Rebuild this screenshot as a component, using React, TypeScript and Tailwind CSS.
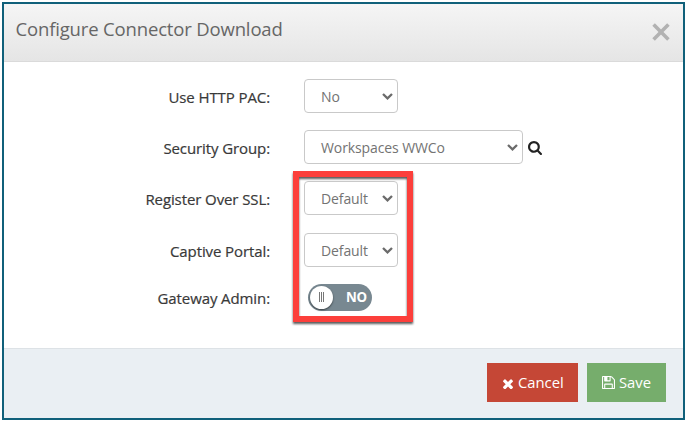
import React from "react";

const timesPath =
  "M1490 1322q0 40-28 68l-136 136q-28 28-68 28t-68-28l-294-294-294 294q-28 28-68 28t-68-28l-136-136q-28-28-28-68t28-68l294-294-294-294q-28-28-28-68t28-68l136-136q28-28 68-28t68 28l294 294 294-294q28-28 68-28t68 28l136 136q28 28 28 68t-28 68l-294 294 294 294q28 28 28 68z";
const searchPath =
  "M1216 832q0-185-131.5-316.5t-316.5-131.5-316.5 131.5-131.5 316.5 131.5 316.5 316.5 131.5 316.5-131.5 131.5-316.5zm512 832q0 52-38 90t-90 38q-54 0-90-38l-343-342q-179 124-399 124-143 0-273.5-55.5t-225-150-150-225-55.5-273.5 55.5-273.5 150-225 225-150 273.5-55.5 273.5 55.5 225 150 150 225 55.5 273.5q0 220-124 399l343 343q37 37 37 90z";
const savePath =
  "M384 1536h768v-384h-768v384zm896 0h128v-896q0-14-10-38.5t-20-34.5l-281-281q-10-10-34-20t-39-10v416q0 40-28 68t-68 28h-576q-40 0-68-28t-28-68v-416h-128v1280h128v-416q0-40 28-68t68-28h832q40 0 68 28t28 68v416zm-384-928v-320q0-13-9.5-22.5t-22.5-9.5h-192q-13 0-22.5 9.5t-9.5 22.5v320q0 13 9.5 22.5t22.5 9.5h192q13 0 22.5-9.5t9.5-22.5zm640 32v928q0 40-28 68t-68 28h-1344q-40 0-68-28t-28-68v-1344q0-40 28-68t68-28h928q40 0 88 20t76 48l280 280q28 28 48 76t20 88z";

function Row({ label, className, children }: { label: string; className: string; children: React.ReactNode }) {
  return (
    <div className={`flex items-center ${className}`}>
      <span className="mr-[34px] w-[266px] pt-[1px] text-right text-[15px] leading-5 tracking-[-0.1px] whitespace-nowrap text-[#393939] [-webkit-text-stroke:0.2px_#393939]">
        {label}
      </span>
      {children}
    </div>
  );
}

function Select({ value, wide = false }: { value: string; wide?: boolean }) {
  return (
    <button
      className={`flex h-[34px] items-center justify-between rounded-[4px] border border-[#c9c9c9] bg-white pr-1 pl-4 text-[14px] tracking-[-0.1px] text-[#737373] ${wide ? "w-[219px]" : "w-[94px]"}`}
    >
      <span className="whitespace-nowrap">{value}</span>
      <svg className="h-[7px] w-[11px]" viewBox="0 0 11 7" fill="none" stroke="#6b6b6b" strokeWidth="2.3">
        <path d="M1 1l4.5 4.4L10 1" />
      </svg>
    </button>
  );
}

export default function App() {
  return (
    <div className="h-[422px] w-[687px] bg-white p-[2px] font-['Open_Sans',sans-serif]">
      <div className="relative flex h-[418px] w-[683px] flex-col border-2 border-[#10607a] bg-white">
        <header className="flex h-[58px] shrink-0 items-start justify-between border-b border-[#dadada] bg-linear-to-b from-[#f5f5f5] to-[#e5e5e5] pr-[13px] pl-[11.5px]">
          <h1 className="pt-[13px] text-[18.5px] leading-6 tracking-[-0.16px] whitespace-nowrap text-[#666]">
            Configure Connector Download
          </h1>
          <button aria-label="Close" className="mt-[19px]">
            <svg className="h-[18px] w-[18px]" viewBox="0 0 18 18" stroke="#b2b2b2" strokeWidth="3.6">
              <path d="M1.6 1.6l14.8 14.8M16.4 1.6L1.6 16.4" />
            </svg>
          </button>
        </header>

        <main className="flex-1">
          <Row label="Use HTTP PAC:" className="mt-[17px] h-[34px]">
            <Select value="No" />
          </Row>
          <Row label="Security Group:" className="mt-[17px] h-[34px]">
            <Select value="Workspaces WWCo" wide />
            <svg className="mt-[1px] ml-[5px] h-[14px] w-[14px]" viewBox="64 128 1664 1664" fill="#222">
              <path d={searchPath} />
            </svg>
          </Row>
          <Row label="Register Over SSL:" className="mt-[17px] h-[34px]">
            <Select value="Default" />
          </Row>
          <Row label="Captive Portal:" className="mt-[18px] h-[34px]">
            <Select value="Default" />
          </Row>
          <Row label="Gateway Admin:" className="mt-[17px] h-[27px]">
            <div className="ml-1 flex h-[27px] w-16 items-center rounded-full bg-[#788891] pl-[2px]">
              <div className="flex h-[23px] w-[23px] items-center justify-center gap-[1px] rounded-full bg-white pb-[2px] shadow-[0_1px_2px_rgba(0,0,0,0.55)]">
                <i className="h-[10px] w-[1px] bg-[#777]" />
                <i className="h-[10px] w-[1px] bg-[#777]" />
                <i className="h-[10px] w-[1px] bg-[#777]" />
              </div>
              <span className="ml-[13px] pb-[1px] text-[13.3px] leading-5 font-bold tracking-[-0.3px] text-white">NO</span>
            </div>
          </Row>
        </main>

        <footer className="flex h-[70px] shrink-0 items-start justify-end gap-[9px] border-t border-[#dde2e6] bg-[#eaeff3] pt-[14px] pr-[17px] text-[14.8px] text-white [text-shadow:0_-1px_0_rgba(0,0,0,0.25)]">
          <button className="flex h-[39px] w-[91px] items-center bg-[#c54736] pl-4">
            <svg className="mt-[2px] h-[10px] w-[10px]" viewBox="302 434 1188 1188" fill="#fff">
              <path d={timesPath} transform="translate(0 100)" />
            </svg>
            <span className="ml-[5px]">Cancel</span>
          </button>
          <button className="flex h-[39px] w-[79px] items-center bg-[#76ad6c] pl-[15px]">
            <svg className="h-[13px] w-[13px]" viewBox="0 128 1536 1536" fill="#fff">
              <path d={savePath} />
            </svg>
            <span className="ml-1">Save</span>
          </button>
        </footer>

        <div className="pointer-events-none absolute top-[167px] left-[289px] h-[151px] w-[120px] border-[6px] border-[#fc3f3b] [filter:drop-shadow(0_2.5px_1px_rgba(0,0,0,0.65))]" />
      </div>
    </div>
  );
}
